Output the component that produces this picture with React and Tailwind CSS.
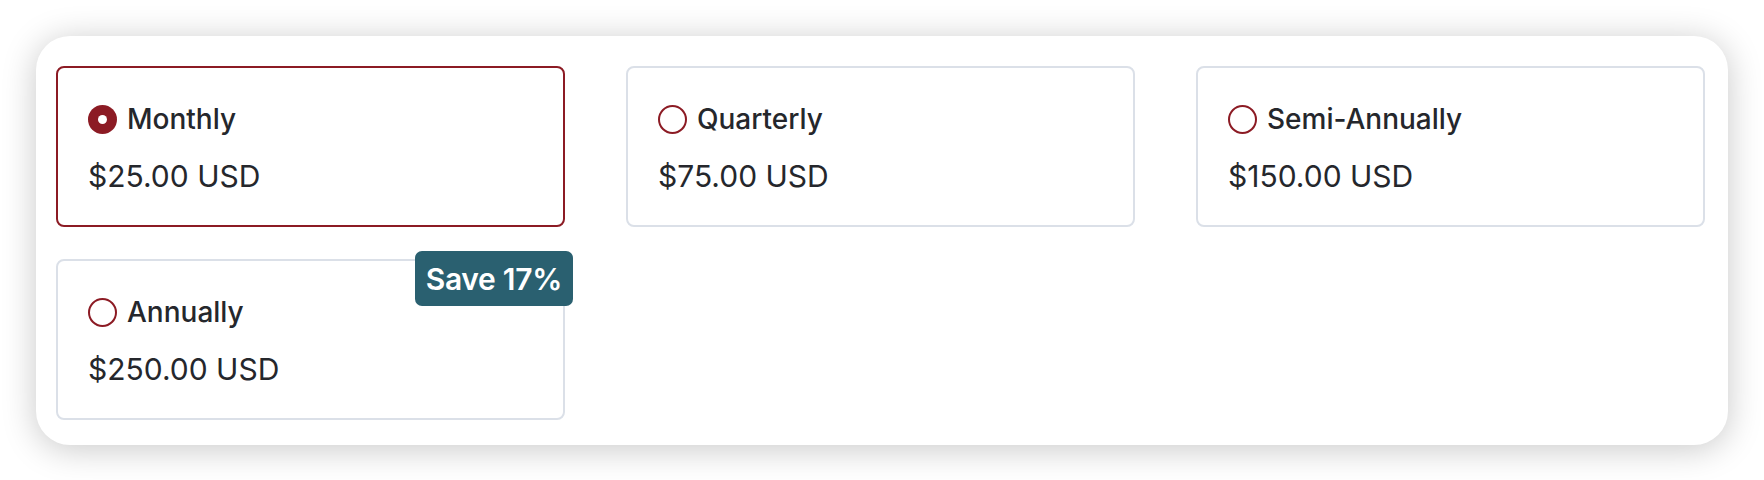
import React from "react";

const plans = [
  { name: "Monthly", price: "$25.00 USD", selected: true },
  { name: "Quarterly", price: "$75.00 USD" },
  { name: "Semi-Annually", price: "$150.00 USD" },
  { name: "Annually", price: "$250.00 USD", badge: "Save 17%" },
];

function Radio({ checked }) {
  if (checked) {
    return (
      <span className="flex h-[29px] w-[29px] shrink-0 items-center justify-center rounded-full bg-[#8c1b24]">
        <span className="h-[9px] w-[9px] rounded-full bg-white" />
      </span>
    );
  }
  return <span className="h-[29px] w-[29px] shrink-0 rounded-full border-2 border-[#8c1b24] bg-white" />;
}

function PlanCard({ plan }) {
  return (
    <div
      className={
        plan.selected
          ? "relative flex h-[161px] flex-col gap-[22px] rounded-[8px] border-2 border-[#8c1b24] bg-white pl-[30px] pt-[34px]"
          : "relative flex h-[161px] flex-col gap-[22px] rounded-[8px] border-2 border-[#dbe0e8] bg-white pl-[30px] pt-[34px]"
      }
    >
      {plan.badge && (
        <span className="absolute right-[-10px] top-[-10px] flex h-[55px] items-center rounded-[7px] bg-[#2a6070] px-[11px] text-[30px] font-semibold leading-none tracking-[-0.3px] text-white">
          {plan.badge}
        </span>
      )}
      <div className="flex h-[34px] items-center gap-[10px]">
        <Radio checked={plan.selected} />
        <span className="text-[28px] font-medium leading-[34px] text-[#25272c]">{plan.name}</span>
      </div>
      <div className="text-[30px] leading-[36px] text-[#25272c]">{plan.price}</div>
    </div>
  );
}

export default function App() {
  return (
    <div
      className="h-[480px] w-[1764px] bg-white pl-[36px] pt-[36px]"
      style={{ fontFamily: "Inter, 'Noto Sans', 'Liberation Sans', sans-serif" }}
    >
      <div className="h-[409px] w-[1692px] rounded-[34px] bg-white pl-[20px] pr-[22px] pt-[30px] shadow-[0_4px_34px_rgba(0,0,0,0.22)]">
        <div className="grid grid-cols-[509px_509px_509px] gap-x-[61px] gap-y-[32px]">
          {plans.map((p) => (
            <PlanCard key={p.name} plan={p} />
          ))}
        </div>
      </div>
    </div>
  );
}
